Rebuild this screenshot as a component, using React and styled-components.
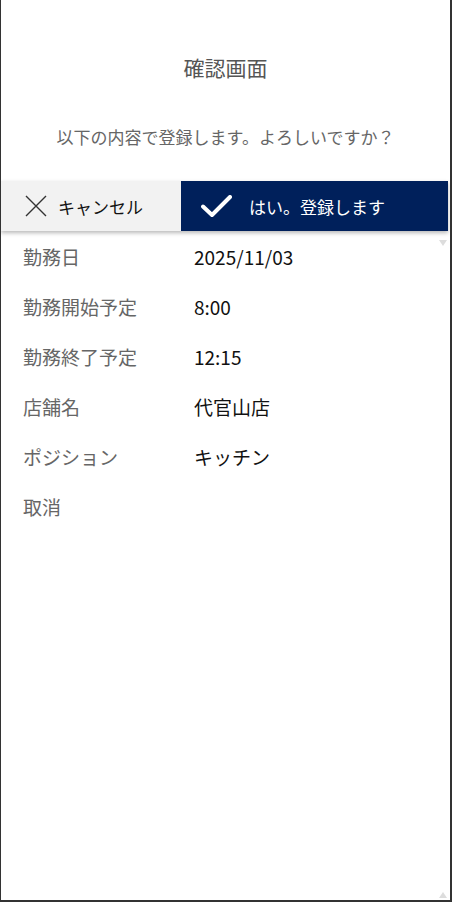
import React from 'react';
import styled, { createGlobalStyle } from 'styled-components';

const GlobalStyle = createGlobalStyle`
  html, body {
    margin: 0;
    padding: 0;
    background: #ffffff;
  }
  body {
    font-family: "Noto Sans CJK JP", "Noto Sans", sans-serif;
  }
`;

const Frame = styled.div`
  box-sizing: border-box;
  width: 452px;
  height: 902px;
  display: flex;
  flex-direction: column;
  border-left: 1px solid #333333;
  border-right: 2px solid #333333;
  border-bottom: 2px solid #333333;
  background: #ffffff;
  overflow: hidden;
`;

const Header = styled.div`
  display: flex;
  flex-direction: column;
  align-items: center;
  padding-top: 51px;
`;

const Title = styled.div`
  font-size: 21px;
  line-height: 32px;
  color: #555555;
`;

const Message = styled.div`
  margin-top: 41px;
  font-size: 17px;
  line-height: 25px;
  color: #666666;
`;

const ActionBar = styled.div`
  margin-top: 32px;
  margin-right: 2px;
  height: 50px;
  display: flex;
  box-shadow: 0 2px 4px rgba(0, 0, 0, 0.28);
  position: relative;
  z-index: 1;
`;

const ActionButton = styled.button`
  border: none;
  margin: 0;
  height: 100%;
  display: flex;
  align-items: center;
  font-family: inherit;
  font-size: 17px;
  font-weight: 400;
  cursor: pointer;
  width: ${(p) => (p.$primary ? 'auto' : '180px')};
  flex: ${(p) => (p.$primary ? '1' : 'none')};
  gap: ${(p) => (p.$primary ? '17px' : '11px')};
  padding: ${(p) => (p.$primary ? '0 0 0 20px' : '0 0 0 24px')};
  background: ${(p) => (p.$primary ? '#00205b' : '#f2f2f2')};
  color: ${(p) => (p.$primary ? '#ffffff' : '#111111')};
`;

const Body = styled.div`
  flex: 1;
  position: relative;
`;

const Rows = styled.div`
  display: grid;
  grid-template-columns: 171px 1fr;
  grid-auto-rows: 50px;
  padding-left: 22px;
`;

const Label = styled.div`
  display: flex;
  align-items: center;
  font-size: 19px;
  color: #666666;
`;

const Value = styled.div`
  display: flex;
  align-items: center;
  font-size: 19px;
  color: #111111;
`;

const ScrollArrow = styled.div`
  position: absolute;
  right: 3px;
  ${(p) => (p.$bottom ? 'bottom: 2px;' : 'top: 9px;')}
  width: 0;
  height: 0;
  border-left: 4px solid transparent;
  border-right: 4px solid transparent;
  ${(p) =>
    p.$bottom
      ? 'border-bottom: 6px solid #dddddd;'
      : 'border-top: 6px solid #dddddd;'}
`;

const CloseIcon = () => (
  <svg width="22" height="22" viewBox="0 0 22 22">
    <path d="M1 1 L21 21 M21 1 L1 21" stroke="#333" strokeWidth="1.4" fill="none" />
  </svg>
);

const CheckIcon = () => (
  <svg width="31" height="23" viewBox="0 0 31 23">
    <path
      d="M2 11.5 L11 20 L29 2"
      stroke="#ffffff"
      strokeWidth="4"
      fill="none"
      strokeLinecap="round"
      strokeLinejoin="round"
    />
  </svg>
);

const items = [
  ['勤務日', '2025/11/03'],
  ['勤務開始予定', '8:00'],
  ['勤務終了予定', '12:15'],
  ['店舗名', '代官山店'],
  ['ポジション', 'キッチン'],
  ['取消', ''],
];

export default function App() {
  return (
    <>
      <GlobalStyle />
      <Frame>
        <Header>
          <Title>確認画面</Title>
          <Message>以下の内容で登録します。よろしいですか？</Message>
        </Header>
        <ActionBar>
          <ActionButton>
            <CloseIcon />
            キャンセル
          </ActionButton>
          <ActionButton $primary>
            <CheckIcon />
            はい。登録します
          </ActionButton>
        </ActionBar>
        <Body>
          <ScrollArrow />
          <Rows>
            {items.map(([label, value]) => (
              <React.Fragment key={label}>
                <Label>{label}</Label>
                <Value>{value}</Value>
              </React.Fragment>
            ))}
          </Rows>
          <ScrollArrow $bottom />
        </Body>
      </Frame>
    </>
  );
}
